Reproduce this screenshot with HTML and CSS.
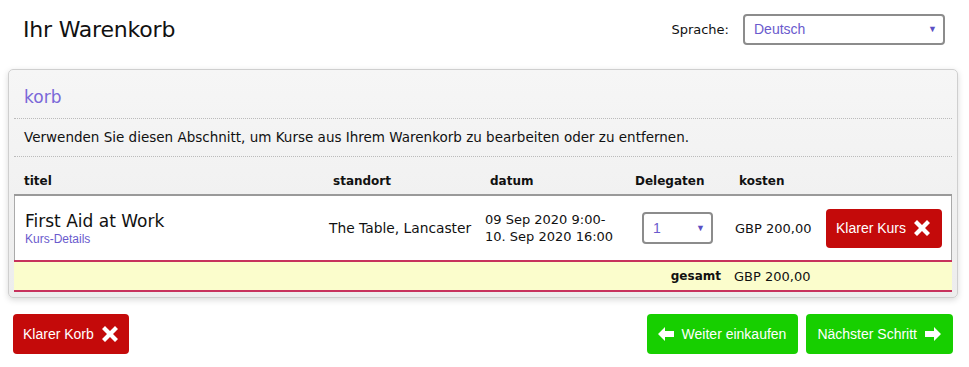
FILE: index.html
```html
<!DOCTYPE html>
<html lang="de">
<head>
    <meta charset="UTF-8">
    <meta name="viewport" content="width=device-width, initial-scale=1.0">
    <title>Ihr Warenkorb</title>
    <link rel="stylesheet" href="styles.css">
</head>
<body>
    <!-- Top bar: page title and language picker -->
    <div class="top-bar">
        <h1 class="page-title">Ihr Warenkorb</h1>
        <div class="lang-picker">
            <label class="lang-label">Sprache:</label>
            <div class="select-box lang-select">
                <span class="select-value">Deutsch</span>
                <span class="select-arrow">&#9660;</span>
            </div>
        </div>
    </div>

    <!-- Basket panel -->
    <div class="basket-panel">
        <div class="panel-heading">korb</div>
        <div class="panel-info">Verwenden Sie diesen Abschnitt, um Kurse aus Ihrem Warenkorb zu bearbeiten oder zu entfernen.</div>

        <div class="basket-head">
            <div class="head-cell h-title">titel</div>
            <div class="head-cell h-place">standort</div>
            <div class="head-cell h-date">datum</div>
            <div class="head-cell h-deleg">Delegaten</div>
            <div class="head-cell h-cost">kosten</div>
            <div class="head-cell"></div>
        </div>

        <div class="basket-row">
            <div class="row-cell course-cell">
                <div class="course-name">First Aid at Work</div>
                <a class="course-link" href="#">Kurs-Details</a>
            </div>
            <div class="row-cell place-cell">The Table, Lancaster</div>
            <div class="row-cell date-cell">09 Sep 2020 9:00-<br>10. Sep 2020 16:00</div>
            <div class="row-cell">
                <div class="select-box qty-select">
                    <span class="select-value">1</span>
                    <span class="select-arrow">&#9660;</span>
                </div>
            </div>
            <div class="row-cell">GBP 200,00</div>
            <div class="row-cell">
                <button class="btn btn-red btn-row">Klarer Kurs
                    <svg class="icon-x" viewBox="0 0 16 16"><path d="M3 0 L8 5 L13 0 L16 3 L11 8 L16 13 L13 16 L8 11 L3 16 L0 13 L5 8 L0 3 Z"/></svg>
                </button>
            </div>
        </div>

        <div class="basket-total">
            <div class="total-label">gesamt</div>
            <div class="total-value">GBP 200,00</div>
        </div>
    </div>

    <!-- Action buttons -->
    <div class="actions">
        <button class="btn btn-red">Klarer Korb
            <svg class="icon-x" viewBox="0 0 16 16"><path d="M3 0 L8 5 L13 0 L16 3 L11 8 L16 13 L13 16 L8 11 L3 16 L0 13 L5 8 L0 3 Z"/></svg>
        </button>
        <div class="actions-right">
            <button class="btn btn-green">
                <svg class="icon-arrow" viewBox="0 0 16 14"><path d="M0 7 L7 0 L7 4 L16 4 L16 10 L7 10 L7 14 Z"/></svg>
                Weiter einkaufen
            </button>
            <button class="btn btn-green">Nächster Schritt
                <svg class="icon-arrow" viewBox="0 0 16 14"><path d="M16 7 L9 0 L9 4 L0 4 L0 10 L9 10 L9 14 Z"/></svg>
            </button>
        </div>
    </div>
</body>
</html>
```

FILE: styles.css
```css
/* Page base */
body {
    margin: 0;
    padding: 0 11px 0 8px;
    background: #fff;
    font-family: "DejaVu Sans", sans-serif;
    color: #111;
}

/* Top bar */
.top-bar {
    display: flex;
    align-items: center;
    justify-content: space-between;
    height: 58px;
    padding: 0 13px 0 15px;
}

.page-title {
    margin: 0;
    font-size: 22px;
    font-weight: normal;
    letter-spacing: -0.2px;
}

.lang-picker {
    display: flex;
    align-items: center;
}

.lang-label {
    font-size: 13px;
    margin-right: 14px;
}

/* Fake select boxes */
.select-box {
    display: flex;
    align-items: center;
    justify-content: space-between;
    box-sizing: border-box;
    border: 2px solid #8c8c8c;
    border-radius: 4px;
    background: #fff;
    font-family: "Liberation Sans", Arial, sans-serif;
    font-size: 14px;
    color: #6a5acd;
    padding: 0 6px 0 9px;
}

.select-arrow {
    font-size: 9px;
    color: #5b4fc4;
}

.lang-select {
    width: 202px;
    height: 31px;
}

.qty-select {
    width: 71px;
    height: 32px;
    padding-left: 9px;
}

/* Panel */
.basket-panel {
    margin-top: 11px;
    background: linear-gradient(#f6f6f6, #ededed);
    border: 1px solid #cfcfcf;
    border-radius: 5px;
    box-shadow: 0 2px 6px rgba(0, 0, 0, 0.15);
    padding: 0 5px 5px;
}

.panel-heading {
    height: 32px;
    padding: 16px 10px 0;
    font-size: 17px;
    line-height: 22px;
    color: #7a68d8;
    border-bottom: 1px dotted #bbb;
}

.panel-info {
    padding: 10px 10px;
    font-size: 13.5px;
    line-height: 17px;
    border-bottom: 1px dotted #bbb;
}

/* Table grid shared by rows */
.basket-head,
.basket-row {
    display: grid;
    grid-template-columns: 304px 156px 157px 93px 91px 1fr;
}

.basket-head {
    padding: 16px 1px 4px;
    border-bottom: 2px solid #9a9a9a;
}

.head-cell {
    font-size: 12px;
    font-weight: bold;
    line-height: 17px;
}

.h-title { padding-left: 9px; }
.h-place { padding-left: 14px; }
.h-date { padding-left: 15px; }
.h-deleg { padding-left: 3px; }
.h-cost { padding-left: 14px; }

.basket-row {
    height: 64px;
    background: #fff;
    border-left: 1px solid #aaa;
    border-right: 1px solid #aaa;
    align-items: center;
}

.row-cell {
    padding-left: 10px;
    font-size: 13px;
}

.course-cell {
    align-self: start;
    padding-top: 15px;
}

.course-name {
    font-size: 17px;
    line-height: 20px;
}

.course-link {
    display: block;
    margin-top: 1px;
    font-family: "Liberation Sans", Arial, sans-serif;
    font-size: 12px;
    color: #6a5acd;
    text-decoration: none;
}

.place-cell {
    font-size: 13.8px;
}

.date-cell {
    line-height: 17px;
}

/* Total row */
.basket-total {
    display: grid;
    grid-template-columns: 710px 1fr;
    height: 28px;
    align-items: center;
    background: #fbfdcc;
    border-top: 2px solid #c7325d;
    border-bottom: 2px solid #c7325d;
    font-size: 13px;
}

.total-label {
    text-align: right;
    font-weight: bold;
    font-size: 12px;
    padding-right: 3px;
}

.total-value {
    padding-left: 10px;
}

/* Buttons */
.btn {
    display: inline-flex;
    align-items: center;
    gap: 8px;
    height: 40px;
    padding: 0 11px 0 10px;
    border: none;
    border-radius: 4px;
    color: #fff;
    font-family: "Liberation Sans", Arial, sans-serif;
    font-size: 14px;
    white-space: nowrap;
    cursor: pointer;
}

.btn-red {
    background: #c40a0a;
}

.btn-green {
    background: #17cf00;
    padding: 0 12px 0 11px;
}

.btn-row {
    height: 39px;
    width: 116px;
}

.icon-x {
    width: 16px;
    height: 16px;
    flex-shrink: 0;
    fill: #fff;
}

.icon-arrow {
    width: 16px;
    height: 14px;
    flex-shrink: 0;
    fill: #fff;
}

.actions {
    display: flex;
    justify-content: space-between;
    margin-top: 16px;
    padding: 0 5px;
}

.actions-right {
    display: flex;
    gap: 8px;
}
```
